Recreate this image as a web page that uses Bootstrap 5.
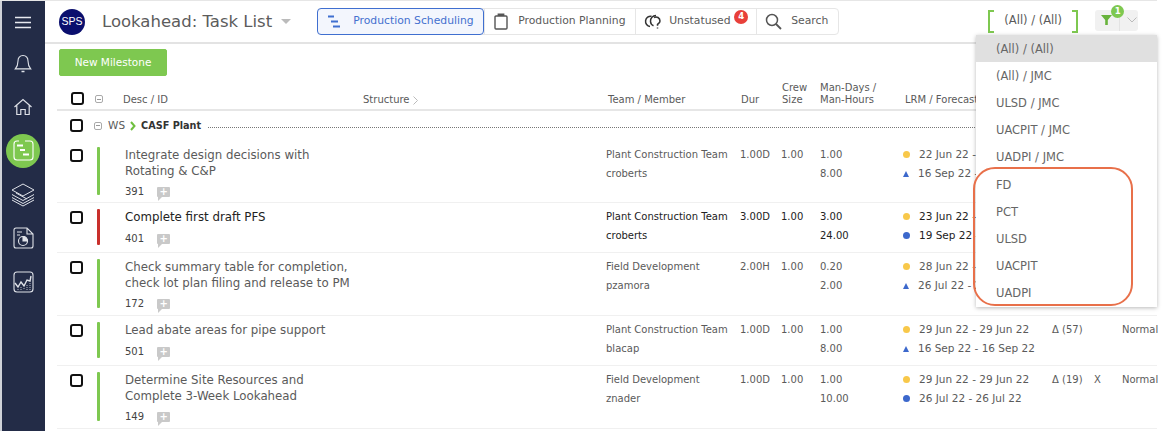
<!doctype html>
<html lang="en">
<head>
<meta charset="utf-8">
<title>Lookahead: Task List</title>
<link href="https://cdn.jsdelivr.net/npm/bootstrap@5.3.0/dist/css/bootstrap.min.css" rel="stylesheet">
<style>
html,body{height:431px;overflow:hidden;background:#fff}
body{font-family:"DejaVu Sans",sans-serif;font-size:10px;color:#5a5a5a;line-height:1.2}
.shell{width:1157px;height:431px;border-top:1px solid #e6e6e6;display:flex}
.rail{width:45px;flex:none;background:#232c47;border-left:2px solid #cfd2d8;display:flex;flex-direction:column;align-items:center;padding-top:10px}
.rail-slot{width:34px;height:43.6px;flex:none;display:flex;align-items:center;justify-content:center;margin-left:-1px}
.rail-slot.burger{height:20px;margin-bottom:10px;margin-top:1px}
.rail-slot.on>span{width:34px;height:34px;border-radius:50%;background:#7ec850;display:flex;align-items:center;justify-content:center}
.main{flex:1;position:relative;min-width:0}
.topbar{height:43px;border-bottom:2px solid #e3e3e3;display:flex;align-items:center;padding-left:14px}
.sps{width:26px;height:26px;border-radius:50%;background:#0b0f6e;color:#fff;font-family:"Liberation Sans",sans-serif;font-size:10.5px;display:flex;align-items:center;justify-content:center;flex:none}
.page-title{font-size:16.5px;color:#5c5c5c;margin:0 0 0 17px;font-weight:400;white-space:nowrap}
.title-caret{width:0;height:0;border:5px solid transparent;border-top:5px solid #bbb;border-bottom:0;margin:0 26px 0 9px}
.tabs{display:flex;height:27px;border:1px solid #e6e6e6;border-radius:4px;font-size:10.8px;margin-top:-1px}
.tabs>div{display:flex;align-items:center;border-left:1px solid #e6e6e6;position:relative;white-space:nowrap}
.tabs>div:first-child{border:1px solid #3f6fd0;border-radius:4px;margin:-1px 0 -1px -1px;background:#f3f6fd;color:#4470cf}
.tab-a{width:167px;padding-left:10px;gap:11px}
.tab-b{width:151px;padding-left:9px;gap:10px}
.tab-c{width:121px;padding-left:8px;gap:8px}
.tab-d{width:82px;padding-left:8px;gap:9px}
.count{position:absolute;left:98px;top:1px;width:14px;height:14px;border-radius:50%;background:#e8403a;color:#fff;font-size:8.5px;font-weight:700;display:flex;align-items:center;justify-content:center}
.scope{margin-left:149px;width:90px;height:23px;display:flex;align-items:center;justify-content:center;border-left:2px solid #7ec850;border-right:2px solid #7ec850;position:relative;font-size:11.5px;margin-top:-1px}
.scope::before{content:"";position:absolute;left:0;width:100%;height:100%;top:0;border-top:2px solid #7ec850;border-bottom:2px solid #7ec850;-webkit-mask:linear-gradient(90deg,#000 4px,transparent 4px,transparent calc(100% - 4px),#000 calc(100% - 4px))}
.funnel{margin-left:17px;width:43px;height:21px;background:#f1f1f1;border-radius:3px;position:relative;display:flex;align-items:center;margin-top:-3px;padding-left:6px;gap:7px}
.funnel i{position:absolute;left:16px;top:-5px;width:13px;height:13px;border-radius:50%;background:#7ec850;color:#fff;font-style:normal;font-weight:700;font-size:8.5px;display:flex;align-items:center;justify-content:center}
.funnel u{width:1px;height:21px;background:#e3e3e3}
.body-pad{padding:5px 0 0 12px}
.go-btn{--bs-btn-bg:#7ec850;--bs-btn-border-color:#7ec850;--bs-btn-color:#fff;--bs-btn-hover-bg:#7ec850;--bs-btn-hover-color:#fff;--bs-btn-font-size:10.5px;--bs-btn-border-radius:2px;--bs-btn-padding-x:0;--bs-btn-padding-y:0;width:108px;height:27px;margin-left:2px;display:block}
.grid-row{display:grid;grid-template-columns:40px 28px 238px 243px 134px 41px 39px 85px 147px 42px 28px 1fr;border-bottom:1px solid #f0f0f0}
.head-row{height:35px;border-bottom:2px solid #e6e6e6;align-items:end;padding-bottom:3px}
.box{width:13px;height:13px;border:2px solid #111;border-radius:3px;display:block;margin-left:13px}
.mini{width:8px;height:8px;border:1px solid #aaa;border-radius:2px;position:relative;display:block}
.mini::after{content:"";position:absolute;left:1px;right:1px;top:2.5px;height:1px;background:#999}
.head-row .box{margin-left:14px;margin-bottom:1px}
.head-row .mini{margin-left:-2px;margin-bottom:3px}
.head-row>span{line-height:12px}
.head-row>span:nth-child(3){margin-left:-2px}
.head-row>span:nth-child(5){margin-left:2px}
.head-row>span:nth-child(6),.head-row>span:nth-child(7){margin-left:1px}
.ws-row{height:30px;display:flex;align-items:center;padding-bottom:1px}
.ws-row .box{margin-right:11px}
.ws-code{margin:0 5px 0 6px;font-size:10.5px}
.ws-name{font-weight:700;color:#333;font-size:9.7px;margin-left:5px}
.ws-line{flex:1;border-top:1px dotted #777;margin-left:7px;margin-top:3px}
.task{min-height:50px;padding:6px 0 4px}
.task.tall{min-height:62px}
.task.mid{min-height:63px}
.task.dark{color:#222}
.task .box{margin-top:2px}
.bar{width:3px;display:block;background:#7ec850;border-radius:1px;margin-bottom:3px}
.bar.red{background:#c9302c}
.desc{font-size:11.8px;line-height:15.5px;width:228px;margin-top:1px}
.tid{display:flex;align-items:center;gap:13px;margin-top:7px;font-size:10px;color:#444}
.note{width:13px;height:10px;background:#c9c9c9;border-radius:1px;position:relative;color:#fff;font-size:10px;line-height:10px;text-align:center;font-weight:700}
.note::after{content:"";position:absolute;left:1px;top:10px;border:2px solid transparent;border-top-color:#c9c9c9;border-left-color:#c9c9c9}
.two{line-height:19px;margin-top:-2px}
.date{display:flex;align-items:center;gap:9px;white-space:nowrap;margin-left:-2px;font-size:10.5px}
.dot{width:7px;height:7px;border-radius:50%;background:#f8c84a;flex:none}
.dot.blue{background:#3c68cc}
.tri{width:0;height:0;border:3.5px solid transparent;border-top:0;border-bottom:6px solid #3c68cc;flex:none}
.scope-menu{display:block;position:absolute;top:34px;right:0;left:auto;width:181px;min-width:0;height:272px;margin:0;padding:0;border:0;border-radius:0;box-shadow:0 1px 4px rgba(0,0,0,.28)}
.scope-menu .dropdown-item{height:27.2px;padding:2px 0 0 20px;display:flex;align-items:center;color:#666;font-size:11.5px}
.scope-menu .dropdown-item.active{background:#e0e0e0;color:#666}
.callout{position:absolute;z-index:1001;left:928px;top:166px;width:160px;height:139px;border:2.5px solid #e8704a;border-radius:22px;pointer-events:none}
</style>
</head>
<body>
<div class="shell">
  <nav class="rail">
    <div class="rail-slot burger"><svg width="17" height="13" viewBox="0 0 17 13" fill="none" stroke="#e8eaf0" stroke-width="1.6"><path d="M0 1.500h16M0 6.500h16M0 11.500h16"/></svg></div>
    <div class="rail-slot"><svg width="18" height="20" viewBox="0 0 18 20" fill="none" stroke="#dfe2e8" stroke-width="1.100"><path d="M9 1.500c-3.300 0-5 2.400-5 5.400 0 4-1 6-2.700 8h15.400c-1.700-2-2.700-4-2.700-8 0-3-1.700-5.400-5-5.400z"/><path d="M7.500 17.500h3" stroke-width="1.500"/></svg></div>
    <div class="rail-slot"><svg width="20" height="18" viewBox="0 0 20 18" fill="none" stroke="#dfe2e8" stroke-width="1.200"><path d="M1.500 9L10 1.500 18.500 9M3.800 7.500V16.500h4v-5h4.400v5h4V7.500"/></svg></div>
    <div class="rail-slot on"><span><svg width="21" height="21" viewBox="0 0 21 21" fill="none" stroke="#fff"><path d="M6 1H4a3 3 0 0 0-3 3v13a3 3 0 0 0 3 3h13a3 3 0 0 0 3-3V4a3 3 0 0 0-3-3h-5" stroke-width="1.100"/><path d="M4 5.500h6M7 10h5M10 14.500h6" stroke-width="2"/></svg></span></div>
    <div class="rail-slot"><svg width="26" height="26" viewBox="0 0 26 26" fill="none" stroke="#dfe2e8" stroke-width="1"><path d="M13 2l11 6-11 6L2 8z"/><path d="M2 12.500l11 6 11-6M2 15.500l11 6 11-6M6 11l11 6"/><path d="M2 18l11 6 11-6"/></svg></div>
    <div class="rail-slot"><svg width="21" height="22" viewBox="0 0 21 22" fill="none" stroke="#dfe2e8" stroke-width="1.100"><path d="M3 1h11l6 6v12a2 2 0 0 1-2 2H3a2 2 0 0 1-2-2V3a2 2 0 0 1 2-2zM14 1v6h6"/><path d="M4 5h5M4 8h3"/><circle cx="10" cy="14" r="4.500"/><path d="M10 14V9.500a4.500 4.500 0 0 1 4.500 4.500z" fill="#dfe2e8"/></svg></div>
    <div class="rail-slot"><svg width="21" height="22" viewBox="0 0 21 22" fill="none" stroke="#dfe2e8" stroke-width="1.100"><rect x="1" y="1" width="19" height="20" rx="3"/><path d="M2 12l3 4 3-5 3 4 3-6 3 1 1-5" stroke-width="1.400"/><path d="M5 18v1M8 16v3M11 17v2M14 14v5M17 12v7" stroke-width=".8" stroke-dasharray="1 1"/></svg></div>
  </nav>
  <div class="main">
    <header class="topbar">
      <span class="sps">SPS</span>
      <h1 class="page-title">Lookahead: Task List</h1>
      <span class="title-caret"></span>
      <div class="tabs">
        <div class="tab-a"><svg width="14" height="13" viewBox="0 0 14 13" stroke="#3f6fd0" stroke-width="2"><path d="M0 1.500h6M3 6.500h7M5 11.500h7"/></svg>Production Scheduling</div>
        <div class="tab-b"><svg width="14" height="17" viewBox="0 0 14 17" fill="none" stroke="#555" stroke-width="1.400"><rect x="1" y="3" width="12" height="13" rx="1"/><path d="M4.500 3V1.500h5V3" fill="#555" stroke-width="1.800"/></svg>Production Planning</div>
        <div class="tab-c"><svg width="17" height="15" viewBox="0 0 17 15" fill="none" stroke="#333" stroke-width="1.500"><path d="M7.500 2.200A5 5 0 1 0 6 12.500"/><path d="M12 1.500A5.500 5.500 0 0 0 6.500 7.500a5 5 0 0 0 3 4.300"/><path d="M10 3.500a4 4 0 0 1 6 3.500c0 2-1.700 2.500-2.500 3.500v1.300M13.500 13.500v1"/></svg>Unstatused<span class="count">4</span></div>
        <div class="tab-d"><svg width="17" height="17" viewBox="0 0 17 17" fill="none" stroke="#555" stroke-width="1.500"><circle cx="7" cy="7" r="5.500"/><path d="M11 11l5 5" stroke-width="1.800"/></svg>Search</div>
      </div>
      <div class="scope">(All) / (All)</div>
      <div class="funnel"><svg width="11" height="10" viewBox="0 0 11 10" fill="#68b33c"><path d="M0 0h11L6.800 5v5H4.200V5z"/></svg><u></u><svg width="10" height="6" viewBox="0 0 10 6" fill="none" stroke="#bbb"><path d="M.5.500L5 5 9.500.5"/></svg><i>1</i></div>
    </header>
    <div class="body-pad">
      <button class="btn go-btn" type="button">New Milestone</button>
      <div class="grid-row head-row">
        <span class="box"></span><span class="mini"></span><span>Desc / ID</span>
        <span>Structure <svg width="5" height="9" viewBox="0 0 5 9" fill="none" stroke="#bbb"><path d="M.5.500l4 4-4 4"/></svg></span>
        <span>Team / Member</span><span>Dur</span><span>Crew<br>Size</span><span>Man-Days /<br>Man-Hours</span><span>LRM / Forecast</span>
      </div>
      <div class="ws-row"><span class="box"></span><span class="mini"></span><span class="ws-code">WS</span><svg width="6" height="10" viewBox="0 0 6 10" fill="none" stroke="#6fbf3f" stroke-width="2"><path d="M1 1l3.500 4L1 9"/></svg><span class="ws-name">CASF Plant</span><span class="ws-line"></span></div>

      <div class="grid-row task tall">
        <span class="box"></span><span class="bar"></span>
        <div><div class="desc">Integrate design decisions with Rotating &amp; C&amp;P</div><div class="tid">391 <span class="note">+</span></div></div><span></span>
        <div class="two">Plant Construction Team<br>croberts</div><div class="two">1.00D</div><div class="two">1.00</div><div class="two">1.00<br>8.00</div>
        <div class="two"><div class="date"><span class="dot"></span>22 Jun 22 - 22 Jun 22</div><div class="date"><span class="tri"></span>16 Sep 22 - 16 Sep 22</div></div>
      </div>
      <div class="grid-row task dark">
        <span class="box"></span><span class="bar red"></span>
        <div><div class="desc">Complete first draft PFS</div><div class="tid">401 <span class="note">+</span></div></div><span></span>
        <div class="two">Plant Construction Team<br>croberts</div><div class="two">3.00D</div><div class="two">1.00</div><div class="two">3.00<br>24.00</div>
        <div class="two"><div class="date"><span class="dot"></span>23 Jun 22 - 23 Jun 22</div><div class="date"><span class="dot blue"></span>19 Sep 22 - 19 Sep 22</div></div>
      </div>
      <div class="grid-row task mid">
        <span class="box"></span><span class="bar"></span>
        <div><div class="desc">Check summary table for completion, check lot plan filing and release to PM</div><div class="tid">172 <span class="note">+</span></div></div><span></span>
        <div class="two">Field Development<br>pzamora</div><div class="two">2.00H</div><div class="two">1.00</div><div class="two">0.20<br>2.00</div>
        <div class="two"><div class="date"><span class="dot"></span>28 Jun 22 - 28 Jun 22</div><div class="date"><span class="tri"></span>26 Jul 22 - 26 Jul 22</div></div>
      </div>
      <div class="grid-row task">
        <span class="box"></span><span class="bar"></span>
        <div><div class="desc">Lead abate areas for pipe support</div><div class="tid">501 <span class="note">+</span></div></div><span></span>
        <div class="two">Plant Construction Team<br>blacap</div><div class="two">1.00D</div><div class="two">1.00</div><div class="two">1.00<br>8.00</div>
        <div class="two"><div class="date"><span class="dot"></span>29 Jun 22 - 29 Jun 22</div><div class="date"><span class="tri"></span>16 Sep 22 - 16 Sep 22</div></div>
        <div class="two">&#916; (57)</div><div class="two"></div><div class="two">Normal</div>
      </div>
      <div class="grid-row task mid">
        <span class="box"></span><span class="bar"></span>
        <div><div class="desc">Determine Site Resources and Complete 3-Week Lookahead</div><div class="tid">149 <span class="note">+</span></div></div><span></span>
        <div class="two">Field Development<br>znader</div><div class="two">1.00D</div><div class="two">1.00</div><div class="two">1.00<br>10.00</div>
        <div class="two"><div class="date"><span class="dot"></span>29 Jun 22 - 29 Jun 22</div><div class="date"><span class="dot blue"></span>26 Jul 22 - 26 Jul 22</div></div>
        <div class="two">&#916; (19)</div><div class="two">X</div><div class="two">Normal</div>
      </div>
    </div>
    <ul class="dropdown-menu scope-menu">
      <li><a class="dropdown-item active" href="#">(All) / (All)</a></li>
      <li><a class="dropdown-item" href="#">(All) / JMC</a></li>
      <li><a class="dropdown-item" href="#">ULSD / JMC</a></li>
      <li><a class="dropdown-item" href="#">UACPIT / JMC</a></li>
      <li><a class="dropdown-item" href="#">UADPI / JMC</a></li>
      <li><a class="dropdown-item" href="#">FD</a></li>
      <li><a class="dropdown-item" href="#">PCT</a></li>
      <li><a class="dropdown-item" href="#">ULSD</a></li>
      <li><a class="dropdown-item" href="#">UACPIT</a></li>
      <li><a class="dropdown-item" href="#">UADPI</a></li>
    </ul>
    <div class="callout"></div>
  </div>
</div>
<script src="https://cdn.jsdelivr.net/npm/bootstrap@5.3.0/dist/js/bootstrap.bundle.min.js"></script>
</body>
</html>
